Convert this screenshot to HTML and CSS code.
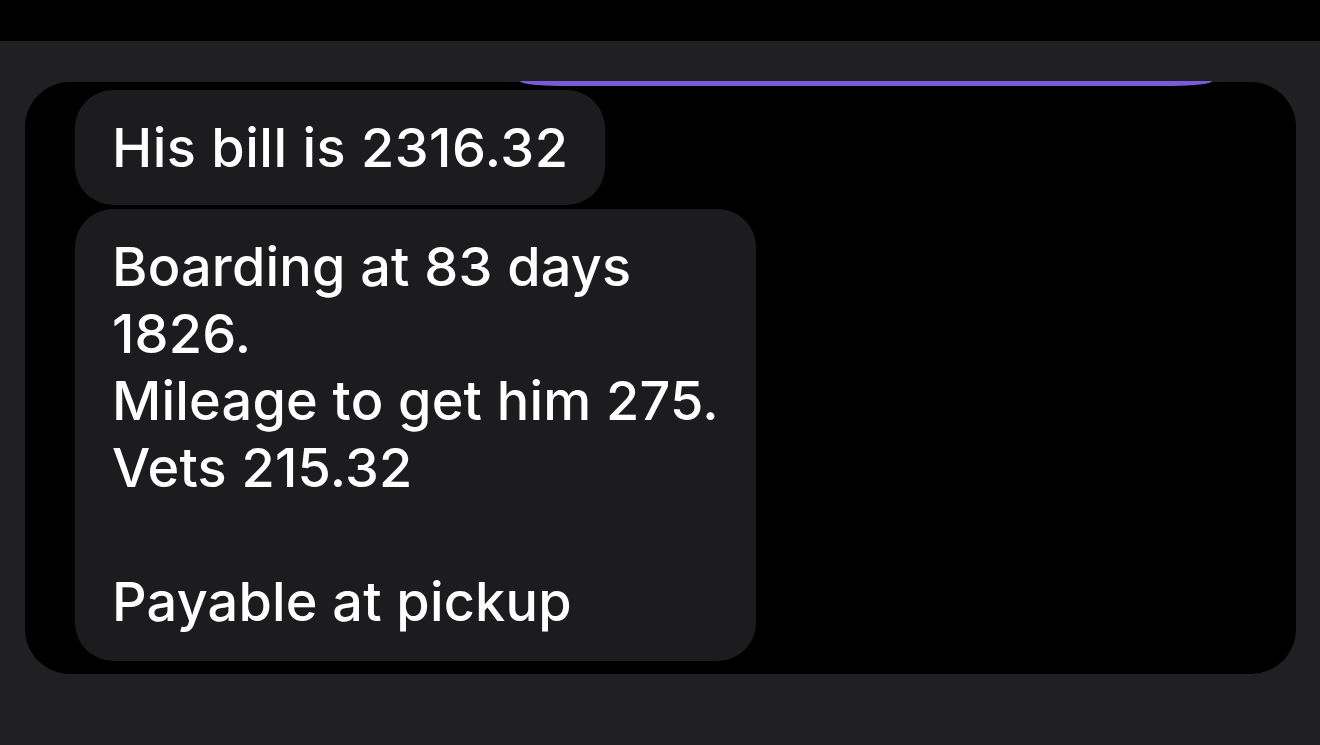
FILE: index.html
```html
<!DOCTYPE html>
<html lang="en">
<head>
<meta charset="utf-8">
<title>Messages</title>
<link rel="stylesheet" href="styles.css">
</head>
<body>
<div class="topbar"></div>
<main class="main">
  <section class="panel">
    <div class="sent-edge"></div>
    <div class="bubble bubble-short">His bill is 2316.32</div>
    <div class="bubble bubble-long">Boarding at 83 days<br>1826.<br>Mileage to get him 275.<br>Vets 215.32<br><br>Payable at pickup</div>
  </section>
</main>
</body>
</html>
```
FILE: styles.css
```css
html, body {
  margin: 0;
  padding: 0;
}
body {
  width: 1320px;
  height: 745px;
  overflow: hidden;
  background: #202022;
  font-family: Inter, "Liberation Sans", Arial, sans-serif;
  color: #ffffff;
}
.topbar {
  height: 41px;
  background: #000;
}
.main {
  padding: 41px 24px 0 25px;
}
.panel {
  position: relative;
  background: #000;
  border-radius: 45px;
  padding: 8px 0 13px 50px;
  display: flex;
  flex-direction: column;
  align-items: flex-start;
  gap: 4px;
}
.sent-edge {
  position: absolute;
  top: -1px;
  left: 495px;
  width: 692px;
  height: 5px;
  background: #7a5cd8;
  border-radius: 0 0 40px 40px / 0 0 5px 5px;
}
.bubble {
  background: #1c1c1e;
  border-radius: 38px;
  font-size: 54px;
  font-weight: 500;
  line-height: 67px;
  padding: 24px 37px;
  -webkit-font-smoothing: antialiased;
}
.bubble-short {
  letter-spacing: 0.5px;
}
.bubble-long {
  letter-spacing: 0.2px;
  padding: 24px 37px 26px 37px;
}
```
